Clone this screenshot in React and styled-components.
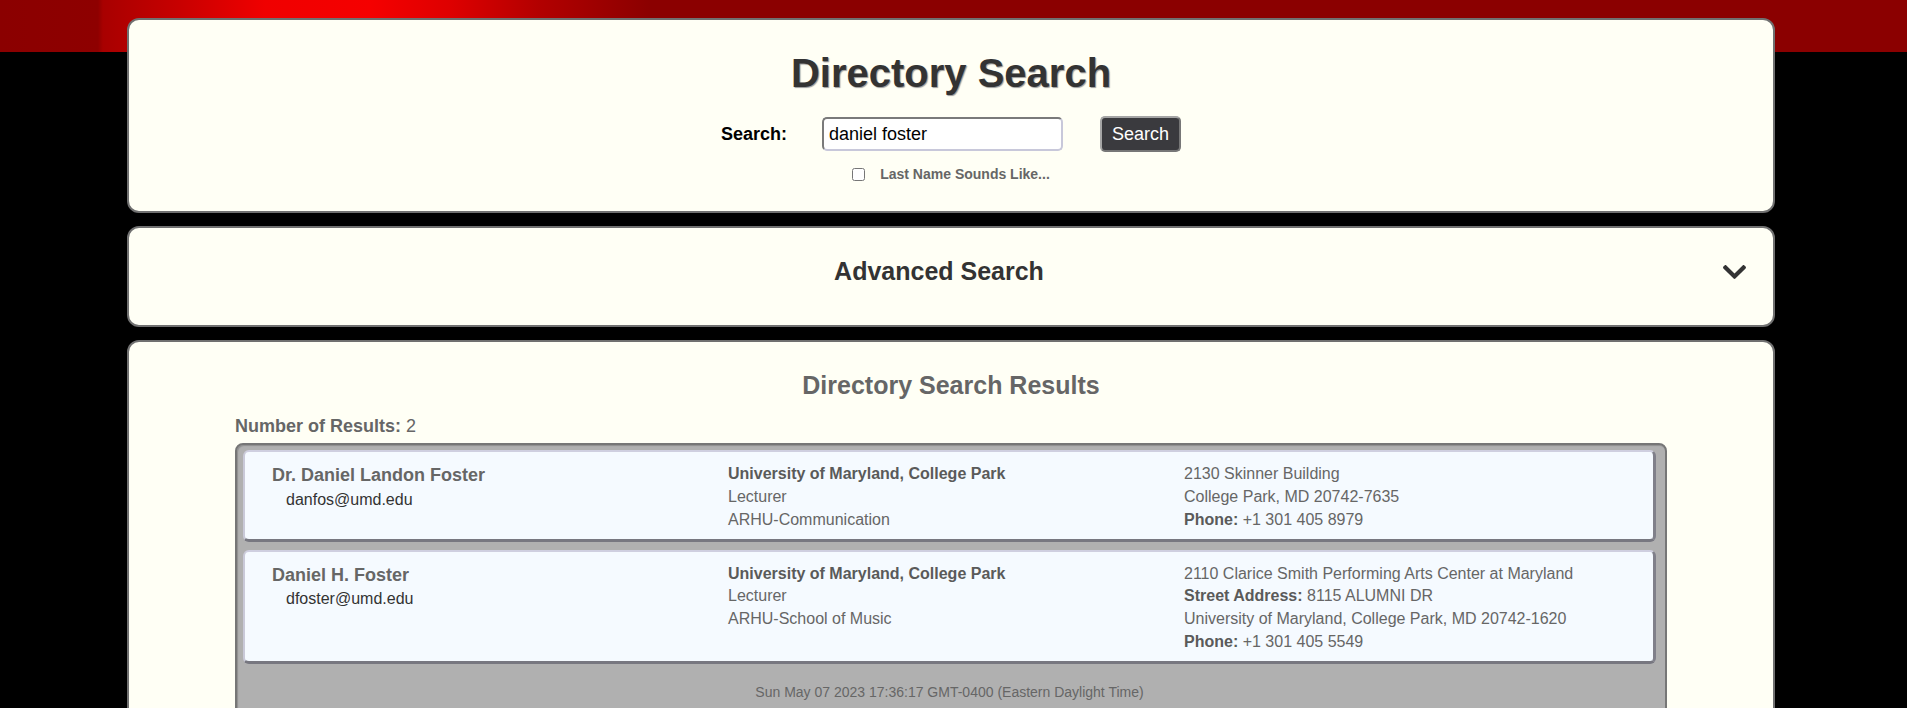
import React from "react";
import styled, { createGlobalStyle } from "styled-components";

const GlobalStyle = createGlobalStyle`
  html, body { overflow: hidden; }
  body {
    margin: 0;
    font-family: "Liberation Sans", Arial, sans-serif;
    background:
      linear-gradient(
        to right,
        #8b0000 0,
        #8e0000 98px,
        #a80000 103px,
        #c80000 180px,
        #f00000 265px,
        #f50000 370px,
        #de0000 450px,
        #b20000 540px,
        #8b0000 650px,
        #8b0000 100%
      ) top left / 100% 52px no-repeat,
      #000;
  }
`;

const Page = styled.div`
  display: flex;
  flex-direction: column;
  align-items: center;
  gap: 13px;
  padding: 18px 5px 40px 0;
`;

const Panel = styled.section`
  box-sizing: border-box;
  width: 1648px;
  background: #fffff5;
  border: 2px solid #707070;
  border-radius: 12px;
`;

const SearchPanel = styled(Panel)`
  display: flex;
  flex-direction: column;
  align-items: center;
  padding: 30px 0 29px;
`;

const MainTitle = styled.h1`
  margin: 0;
  font-size: 40px;
  line-height: 46px;
  font-weight: bold;
  color: #333;
  text-shadow: 1px 1px 1px #9a9a9a;
`;

const SearchRow = styled.form`
  display: flex;
  align-items: center;
  margin: 20px 0 0;
`;

const SearchLabel = styled.label`
  font-size: 18px;
  font-weight: bold;
  color: #000;
  margin-right: 35px;
`;

const SearchInput = styled.input`
  box-sizing: border-box;
  width: 241px;
  height: 34px;
  padding: 0 5px;
  font-family: "Liberation Sans", Arial, sans-serif;
  font-size: 18px;
  color: #000;
  background: #fff;
  border: 2px solid;
  border-color: #7a7a7a #c8c8da #c8c8da #7a7a7a;
  border-radius: 5px;
  outline: none;
`;

const SearchButton = styled.button`
  box-sizing: border-box;
  margin-left: 37px;
  width: 81px;
  height: 36px;
  padding: 0;
  font-family: "Liberation Sans", Arial, sans-serif;
  font-size: 18px;
  color: #fff;
  background: #3a3a3e;
  border: 2px solid;
  border-color: #a5a5a5 #777 #777 #a5a5a5;
  border-radius: 5px;
`;

const CheckRow = styled.div`
  display: flex;
  align-items: center;
  gap: 15px;
  margin-top: 14px;
  height: 16px;
`;

const Checkbox = styled.input`
  width: 13px;
  height: 13px;
  margin: 0;
`;

const CheckLabel = styled.label`
  font-size: 14px;
  line-height: 16px;
  font-weight: bold;
  color: #666;
`;

const AdvancedPanel = styled(Panel)`
  display: flex;
  align-items: center;
  padding: 29px 27px 39px 26px;
`;

const SectionTitle = styled.h2`
  flex: 1;
  margin: 0;
  font-size: 25px;
  line-height: 29px;
  font-weight: bold;
  text-align: center;
  color: ${(p) => p.$color || "#333"};
`;

const Chevron = styled.svg`
  width: 23px;
  height: 14px;
  fill: #333;
  flex: none;
`;

const ResultsPanel = styled(Panel)`
  display: flex;
  flex-direction: column;
  align-items: center;
  padding: 29px 0 40px;
`;

const ResultsWrap = styled.div`
  width: 1432px;
  margin-top: 16px;
`;

const Count = styled.div`
  font-size: 18px;
  line-height: 21px;
  color: #666;
  b { font-weight: bold; }
`;

const List = styled.div`
  box-sizing: border-box;
  margin-top: 6px;
  display: flex;
  flex-direction: column;
  gap: 8px;
  padding: 5px 9px 0 6px;
  background: #b0b0b0;
  border: 2px solid #767676;
  border-radius: 8px;
  box-shadow: inset 1px 1px 1px #909090;
`;

const Card = styled.article`
  display: grid;
  grid-template-columns: repeat(3, 1fr);
  padding: 11px 13px 7px 27px;
  background: #f5faff;
  border-style: solid;
  border-width: 2px 3px 3px 2px;
  border-color: #cfcfe0 #80808a #777780 #c9c9d8;
  border-radius: 6px;
  font-size: 16px;
  line-height: 22.86px;
  color: #666;
`;

const Col = styled.div`
  display: flex;
  flex-direction: column;
`;

const Name = styled.div`
  font-size: 18px;
  line-height: 25.7px;
  font-weight: bold;
  color: #666;
`;

const Email = styled.div`
  padding-left: 14px;
  color: #333;
`;

const Line = styled.div`
  font-weight: ${(p) => (p.$bold ? "bold" : "normal")};
  color: ${(p) => (p.$bold ? "#5a5a5a" : "#666")};
  white-space: nowrap;
  b { color: #5a5a5a; }
`;

const Footer = styled.div`
  padding: 12px 0 16px;
  text-align: center;
  font-size: 14px;
  line-height: 16px;
  color: #666;
`;

const people = [
  {
    name: "Dr. Daniel Landon Foster",
    email: "danfos@umd.edu",
    org: ["University of Maryland, College Park", "Lecturer", "ARHU-Communication"],
    addr: [
      { text: "2130 Skinner Building" },
      { text: "College Park, MD 20742-7635" },
      { label: "Phone:", text: "+1 301 405 8979" },
    ],
  },
  {
    name: "Daniel H. Foster",
    email: "dfoster@umd.edu",
    org: ["University of Maryland, College Park", "Lecturer", "ARHU-School of Music"],
    addr: [
      { text: "2110 Clarice Smith Performing Arts Center at Maryland" },
      { label: "Street Address:", text: "8115 ALUMNI DR" },
      { text: "University of Maryland, College Park, MD 20742-1620" },
      { label: "Phone:", text: "+1 301 405 5549" },
    ],
  },
];

export default function App() {
  return (
    <>
      <GlobalStyle />
      <Page>
        <SearchPanel>
          <MainTitle>Directory Search</MainTitle>
          <SearchRow onSubmit={(e) => e.preventDefault()}>
            <SearchLabel htmlFor="q">Search:</SearchLabel>
            <SearchInput id="q" defaultValue="daniel foster" />
            <SearchButton type="submit">Search</SearchButton>
          </SearchRow>
          <CheckRow>
            <Checkbox type="checkbox" id="sounds" />
            <CheckLabel htmlFor="sounds">Last Name Sounds Like...</CheckLabel>
          </CheckRow>
        </SearchPanel>

        <AdvancedPanel>
          <SectionTitle>Advanced Search</SectionTitle>
          <Chevron viewBox="5 123 438 266" aria-hidden="true">
            <path d="M207.029 381.476L12.686 187.132c-9.373-9.373-9.373-24.569 0-33.941l22.667-22.667c9.357-9.357 24.522-9.375 33.901-.04L224 284.505l154.745-154.021c9.379-9.335 24.544-9.317 33.901.04l22.667 22.667c9.373 9.373 9.373 24.569 0 33.941L240.971 381.476c-9.373 9.372-24.569 9.372-33.942 0z" />
          </Chevron>
        </AdvancedPanel>

        <ResultsPanel>
          <SectionTitle $color="#666">Directory Search Results</SectionTitle>
          <ResultsWrap>
            <Count>
              <b>Number of Results:</b> 2
            </Count>
            <List>
              {people.map((p) => (
                <Card key={p.email}>
                  <Col>
                    <Name>{p.name}</Name>
                    <Email>{p.email}</Email>
                  </Col>
                  <Col>
                    {p.org.map((o, i) => (
                      <Line key={o} $bold={i === 0}>
                        {o}
                      </Line>
                    ))}
                  </Col>
                  <Col>
                    {p.addr.map((a) => (
                      <Line key={a.text}>
                        {a.label && <b>{a.label}</b>}
                        {a.label ? " " : ""}
                        {a.text}
                      </Line>
                    ))}
                  </Col>
                </Card>
              ))}
              <Footer>Sun May 07 2023 17:36:17 GMT-0400 (Eastern Daylight Time)</Footer>
            </List>
          </ResultsWrap>
        </ResultsPanel>
      </Page>
    </>
  );
}
